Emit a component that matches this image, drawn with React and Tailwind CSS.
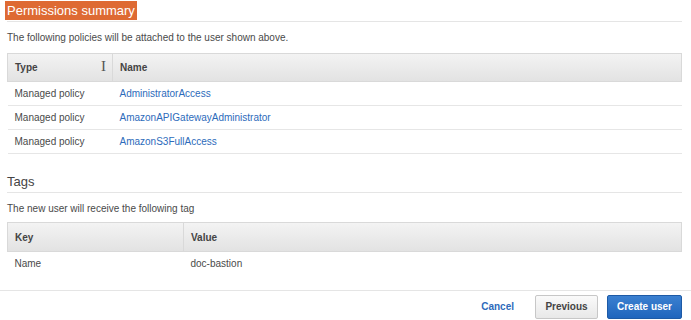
const policies = [
  { type: 'Managed policy', name: 'AdministratorAccess' },
  { type: 'Managed policy', name: 'AmazonAPIGatewayAdministrator' },
  { type: 'Managed policy', name: 'AmazonS3FullAccess' },
]

const tags = [{ key: 'Name', value: 'doc-bastion' }]

const headCell = 'h-[28px] px-[7px] text-left align-middle font-bold text-[10px] text-[#444]'

export default function App() {
  return (
    <div className="w-[691px] h-[320px] overflow-hidden bg-white font-['Liberation_Sans',Arial,sans-serif] text-[10px] text-[#4a4a4a]">
      <div className="pl-[7px] pr-[9px]">
        {/* permissions summary */}
        <div className="pt-[1px] h-[21px]">
          <span className="-ml-[2px] inline-block h-[19px] px-[2px] bg-[#de6a33] text-white text-[13px] leading-[19px]">
            Permissions summary
          </span>
        </div>
        <div className="border-t border-[#e5e5e5]" />
        <p className="mt-[9px] leading-[13px]">The following policies will be attached to the user shown above.</p>

        <table className="mt-[9px] w-full border-collapse">
          <thead>
            <tr className="bg-gradient-to-b from-[#f3f3f3] to-[#e2e2e2]">
              <th className={`${headCell} w-[105px] border border-[#d9d9d9] relative`}>
                Type
                <span className="absolute right-[6px] top-[4px] text-[15px] leading-[16px] font-normal text-[#555] font-['Liberation_Serif',serif]">I</span>
              </th>
              <th className={`${headCell} border border-[#d9d9d9]`}>Name</th>
            </tr>
          </thead>
          <tbody>
            {policies.map((p) => (
              <tr key={p.name} className="border-b border-[#e6e6e6]">
                <td className="h-[24px] px-[7px] align-middle">{p.type}</td>
                <td className="h-[24px] px-[7px] align-middle text-[#2d6bbb]">{p.name}</td>
              </tr>
            ))}
          </tbody>
        </table>

        {/* tags */}
        <h3 className="mt-[20px] text-[13px] leading-[16px] text-[#444]">Tags</h3>
        <div className="mt-[2px] border-t border-[#e5e5e5]" />
        <p className="mt-[9px] leading-[13px]">The new user will receive the following tag</p>

        <table className="mt-[7px] w-full border-collapse">
          <thead>
            <tr className="bg-gradient-to-b from-[#f3f3f3] to-[#e2e2e2]">
              <th className={`${headCell} h-[29px] w-[176px] border border-[#d9d9d9]`}>Key</th>
              <th className={`${headCell} h-[29px] border border-[#d9d9d9]`}>Value</th>
            </tr>
          </thead>
          <tbody>
            {tags.map((t) => (
              <tr key={t.key}>
                <td className="h-[24px] px-[7px] align-middle">{t.key}</td>
                <td className="h-[24px] px-[7px] align-middle">{t.value}</td>
              </tr>
            ))}
          </tbody>
        </table>
      </div>

      {/* footer */}
      <div className="mt-[14px] border-t border-[#e5e5e5]" />
      <div className="flex items-start justify-end gap-[9px] pr-[9px] pt-[4px]">
        <button className="mr-[12px] h-[24px] font-bold text-[10px] text-[#2d6bbb]">Cancel</button>
        <button className="h-[24px] w-[63px] rounded-[2px] border border-[#c7c7c7] bg-gradient-to-b from-[#fafafa] to-[#e8e8e8] font-bold text-[10px] text-[#444]">
          Previous
        </button>
        <button className="h-[24px] w-[75px] rounded-[2px] border border-[#1d5aa6] bg-gradient-to-b from-[#3b80d0] to-[#1f65bd] font-bold text-[10px] text-white">
          Create user
        </button>
      </div>
    </div>
  )
}
